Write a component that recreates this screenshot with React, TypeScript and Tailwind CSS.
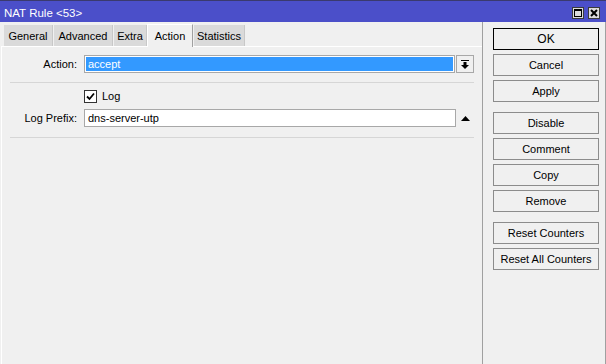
import React from 'react';

const tabs = [
  { name: 'General', w: 'w-[50px]' },
  { name: 'Advanced', w: 'w-[60px]' },
  { name: 'Extra', w: 'w-[34px]' },
  { name: 'Action', w: 'w-[46px]', active: true },
  { name: 'Statistics', w: 'w-[52px]' },
];

const buttonGroups = [
  ['OK', 'Cancel', 'Apply'],
  ['Disable', 'Comment', 'Copy', 'Remove'],
  ['Reset Counters', 'Reset All Counters'],
];

function TitleButton({ kind }: { kind: 'max' | 'close' }) {
  return (
    <div className="w-[12px] h-[12px] bg-[#dcdcdc] border border-[#3c3c3c] flex items-center justify-center">
      {kind === 'max' ? (
        <svg width="8" height="8" viewBox="0 0 8 8">
          <rect x="0.5" y="0.5" width="7" height="7" fill="none" stroke="#000" />
          <rect x="0" y="0" width="8" height="2" fill="#000" />
        </svg>
      ) : (
        <svg width="8" height="8" viewBox="0 0 8 8">
          <path d="M1 1L7 7M7 1L1 7" stroke="#000" strokeWidth="2" />
        </svg>
      )}
    </div>
  );
}

export default function App() {
  return (
    <div className="w-[606px] h-[364px] bg-[#f0f0f0] flex flex-col overflow-hidden font-['Liberation_Sans',Arial,sans-serif] text-[11px] text-black">
      {/* title bar */}
      <div className="h-[22px] bg-[#4b4fc9] border-t border-[#3a3a6e] flex items-center justify-between pl-[4px] pr-[6px]">
        <span className="text-white text-[11.5px] pt-[4px]">NAT Rule &lt;53&gt;</span>
        <div className="flex gap-[4px] pt-[3px]">
          <TitleButton kind="max" />
          <TitleButton kind="close" />
        </div>
      </div>

      <div className="flex flex-1">
        {/* left: tabs + panel */}
        <div className="w-[483px] flex flex-col border-r border-[#a0a0a0]">
          <div className="h-[24px] flex items-end pl-[3px]">
            {tabs.map((t) =>
              t.active ? (
                <div
                  key={t.name}
                  className={`${t.w} h-[23px] -mb-[1px] relative z-10 bg-[#f0f0f0] border-t border-l border-white border-r border-r-[#a0a0a0] flex items-center justify-center`}
                >
                  {t.name}
                </div>
              ) : (
                <div
                  key={t.name}
                  className={`${t.w} h-[21px] bg-[#dadada] border-l border-[#f0f0f0] border-r border-r-[#c8c8c8] flex items-center justify-center pt-[2px]`}
                >
                  {t.name}
                </div>
              )
            )}
          </div>

          <div className="flex-1 ml-[1px] border-l border-t border-white pt-[8px]">
            {/* action row */}
            <div className="flex items-center h-[18px]">
              <span className="w-[75px] text-right">Action:</span>
              <div className="ml-[7px] w-[371px] h-[18px] border border-[#a8a8a8] bg-white p-[1px]">
                <div className="h-full bg-[#3399ff] text-white flex items-center pl-[2px]">accept</div>
              </div>
              <div className="ml-[1px] w-[18px] h-[18px] border border-[#a8a8a8] bg-[#f0f0f0] flex items-center justify-center">
                <svg width="8" height="9" viewBox="0 0 8 9">
                  <rect x="0" y="0" width="8" height="1" fill="#000" />
                  <rect x="2.5" y="2" width="3" height="3" fill="#000" />
                  <path d="M0 5H8L4 9Z" fill="#000" />
                </svg>
              </div>
            </div>

            <div className="ml-[8px] mt-[9px] w-[464px] h-[1px] bg-[#d6d6d6]" />

            {/* log checkbox */}
            <div className="flex items-center mt-[7px] h-[13px] pl-[82px]">
              <div className="w-[13px] h-[13px] border border-[#333] bg-white flex items-center justify-center">
                <svg width="9" height="9" viewBox="0 0 9 9">
                  <path d="M1 4.5L3.5 7L8 1.5" fill="none" stroke="#000" strokeWidth="1.8" />
                </svg>
              </div>
              <span className="ml-[5px]">Log</span>
            </div>

            {/* log prefix */}
            <div className="flex items-center h-[18px] mt-[6px]">
              <span className="w-[75px] text-right">Log Prefix:</span>
              <div className="ml-[7px] w-[372px] h-[18px] border border-[#a8a8a8] bg-white flex items-center pl-[3px]">
                dns-server-utp
              </div>
              <div className="w-[18px] h-[18px] flex items-center justify-center">
                <svg width="9" height="5" viewBox="0 0 9 5">
                  <path d="M0 5H9L4.5 0Z" fill="#000" />
                </svg>
              </div>
            </div>

            <div className="ml-[8px] mt-[10px] w-[464px] h-[1px] bg-[#d6d6d6]" />
          </div>
        </div>

        {/* right: buttons */}
        <div className="flex-1 border-r border-[#a0a0a0] pl-[10px] pt-[6px] flex flex-col gap-[10px]">
          {buttonGroups.map((group, gi) => (
            <div key={gi} className="flex flex-col gap-[4px]">
              {group.map((b) => (
                <div
                  key={b}
                  className={`w-[106px] h-[22px] flex items-center justify-center bg-[#f0f0f0] border ${
                    b === 'OK' ? 'border-black text-[12px]' : 'border-[#8c8c8c]'
                  }`}
                >
                  {b}
                </div>
              ))}
            </div>
          ))}
        </div>
      </div>
    </div>
  );
}
